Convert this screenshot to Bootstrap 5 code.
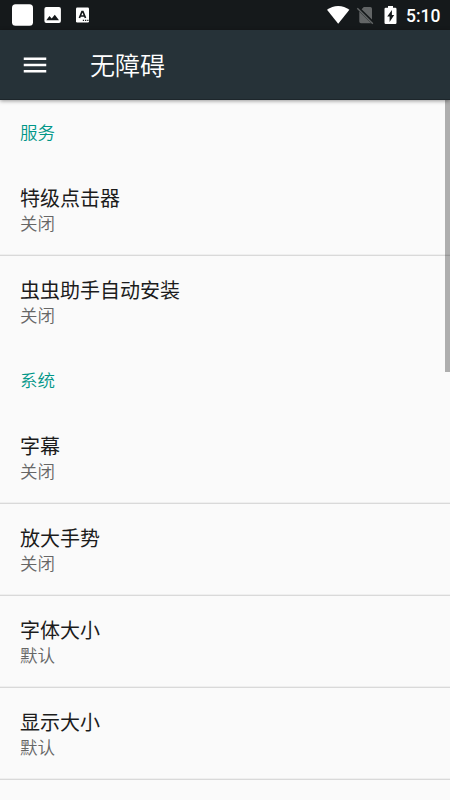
<!DOCTYPE html>
<html lang="zh-CN">
<head>
<meta charset="utf-8">
<meta name="viewport" content="width=device-width, initial-scale=1">
<title>无障碍</title>
<link href="https://cdn.jsdelivr.net/npm/bootstrap@5.3.0/dist/css/bootstrap.min.css" rel="stylesheet">
<style>
  body { height: 800px; background: #fafafa; font-family: "Noto Sans CJK SC", sans-serif; }
  .status-bar { height: 30px; background: #15191b; }
  .status-left { padding-left: 12px; }
  .status-right { padding-right: 10px; }
  .clock { font-family: Roboto, sans-serif; font-size: 17.5px; line-height: 28px; padding-top: 2px; font-weight: 500; margin-left: 9px; width: 34px; white-space: nowrap; }
  .app-bar { height: 70px; background: #263238; padding: 0 0 0 20px; border-bottom: 1px solid #1d262b; box-shadow: 0 1px 4px rgba(0,0,0,.4); z-index: 2; }
  .menu-button { width: 30px; height: 30px; margin-top: 1px; }
  .app-title { font-size: 25px; line-height: 34px; margin-left: 40px; padding-bottom: 1px; font-weight: 350; }
  .group-title { height: 64px; padding: 0 20px 2px; color: #009688; font-size: 17.5px; font-weight: 350; }
  .setting { height: 92px; padding: 20px 20px 0; background: transparent; border: 0; border-bottom: 1px solid transparent; }
  .setting.divided { border-bottom-color: #d9d9d9; box-shadow: inset 0 -1px #efefef; }
  .setting-name { font-size: 20px; line-height: 28px; color: #1c1c1c; }
  .setting-state { font-size: 17.5px; line-height: 22px; color: #666; font-weight: 350; }
  .scroll-thumb { right: 0; top: 0; width: 5px; height: 272px; background: rgba(0,0,0,.3); }
</style>
<script src="https://cdn.jsdelivr.net/npm/bootstrap@5.3.0/dist/js/bootstrap.bundle.min.js"></script>
</head>
<body class="d-flex flex-column overflow-hidden">
<header class="status-bar d-flex justify-content-between align-items-center text-white flex-shrink-0">
  <div class="status-left d-flex">
    <svg width="90" height="30" viewBox="12 0 90 30" aria-hidden="true">
      <rect x="12" y="4.3" width="21" height="21.4" rx="3.5" fill="#fff"/>
      <path fill="#fff" fill-rule="evenodd" d="M46.300 7H59a1.900 1.900 0 0 1 1.900 1.900V21a1.900 1.900 0 0 1-1.900 1.900H46.300A1.900 1.900 0 0 1 44.400 21V8.900A1.900 1.900 0 0 1 46.300 7ZM46.300 20.300H59L54.800 14.700 51.700 18.600 49.500 16Z"/>
      <rect x="76" y="7.500" width="13" height="15" rx="1.200" fill="#fff"/>
      <path d="M79.400 18 82 11.500h.9L85.500 18M80.300 16h4.300" fill="none" stroke="#15191b" stroke-width="1.700"/>
      <path d="M82.800 19.800h1.300v1.300h-1.300zM85 19.800h1.300v1.300H85zM87.200 19.800h1.300v1.300h-1.300z" fill="#15191b"/>
    </svg>
  </div>
  <div class="status-right d-flex align-items-center">
    <svg width="70" height="30" viewBox="327 0 70 30" aria-hidden="true">
      <path fill="#fff" d="M327 9.800Q332 6 338.200 6T349.400 9.800L338.200 23.700Z"/>
      <path fill="#626566" d="M361.600 9.300 363.800 7H370.300Q372 7 372 8.700V19.600ZM359.300 11.500 371.100 23.300H361Q359.300 23.300 359.300 21.600Z"/>
      <path stroke="#626566" stroke-width="1.400" d="M357.300 8.200 372.800 23.700"/>
      <path fill="#fff" fill-rule="evenodd" d="M388 6h5v1.800h2.300q1.200 0 1.200 1.200v13.800q0 1.200-1.200 1.200h-9.600q-1.200 0-1.200-1.200V9q0-1.200 1.200-1.200H388ZM391.900 10 387.200 16.600H389.600V22L394.200 14.900H391.900Z"/>
    </svg>
    <span class="clock">5:10</span>
  </div>
</header>
<nav class="app-bar navbar flex-nowrap justify-content-start position-relative flex-shrink-0 text-white">
  <button class="menu-button btn p-0 border-0 d-flex" type="button" aria-label="菜单">
    <svg width="30" height="30" viewBox="0 0 24 24" fill="#fff"><path d="M3 18h18v-2H3v2zm0-5h18v-2H3v2zm0-7v2h18V6H3z"/></svg>
  </button>
  <h1 class="app-title mb-0">无障碍</h1>
</nav>
<main class="position-relative flex-grow-1">
  <section>
    <h2 class="group-title d-flex align-items-center mb-0">服务</h2>
    <div class="list-group list-group-flush">
      <div class="setting divided"><div class="setting-name">特级点击器</div><div class="setting-state">关闭</div></div>
      <div class="setting"><div class="setting-name">虫虫助手自动安装</div><div class="setting-state">关闭</div></div>
    </div>
  </section>
  <section>
    <h2 class="group-title d-flex align-items-center mb-0">系统</h2>
    <div class="list-group list-group-flush">
      <div class="setting divided"><div class="setting-name">字幕</div><div class="setting-state">关闭</div></div>
      <div class="setting divided"><div class="setting-name">放大手势</div><div class="setting-state">关闭</div></div>
      <div class="setting divided"><div class="setting-name">字体大小</div><div class="setting-state">默认</div></div>
      <div class="setting divided"><div class="setting-name">显示大小</div><div class="setting-state">默认</div></div>
    </div>
  </section>
  <div class="scroll-thumb position-absolute"></div>
</main>
</body>
</html>
